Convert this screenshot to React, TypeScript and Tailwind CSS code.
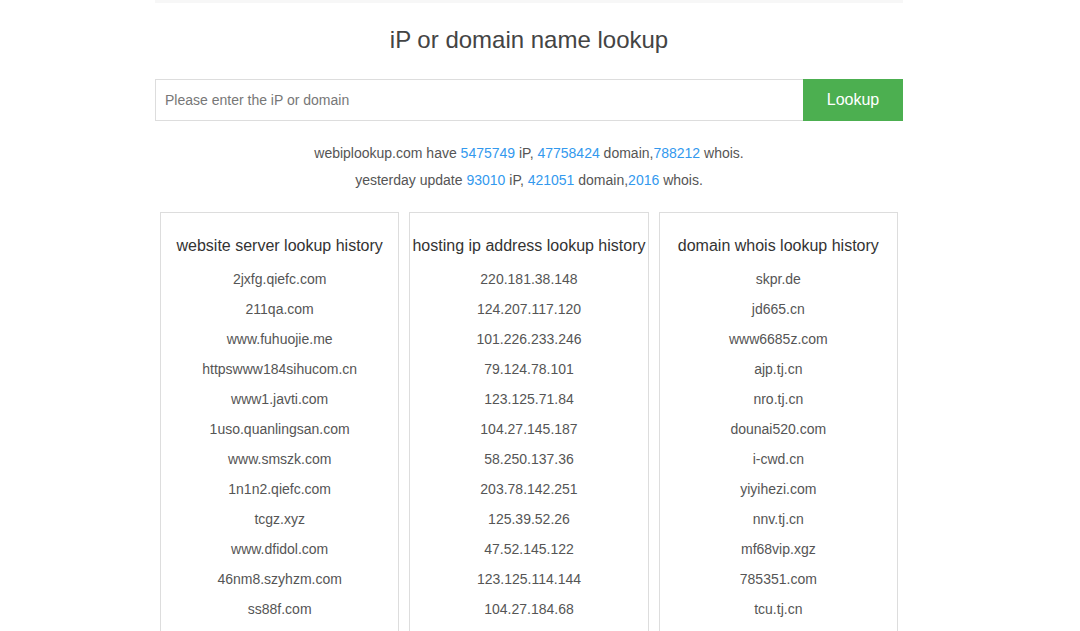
import React from "react"

const servers = [
  "2jxfg.qiefc.com",
  "211qa.com",
  "www.fuhuojie.me",
  "httpswww184sihucom.cn",
  "www1.javti.com",
  "1uso.quanlingsan.com",
  "www.smszk.com",
  "1n1n2.qiefc.com",
  "tcgz.xyz",
  "www.dfidol.com",
  "46nm8.szyhzm.com",
  "ss88f.com",
]

const ips = [
  "220.181.38.148",
  "124.207.117.120",
  "101.226.233.246",
  "79.124.78.101",
  "123.125.71.84",
  "104.27.145.187",
  "58.250.137.36",
  "203.78.142.251",
  "125.39.52.26",
  "47.52.145.122",
  "123.125.114.144",
  "104.27.184.68",
]

const whois = [
  "skpr.de",
  "jd665.cn",
  "www6685z.com",
  "ajp.tj.cn",
  "nro.tj.cn",
  "dounai520.com",
  "i-cwd.cn",
  "yiyihezi.com",
  "nnv.tj.cn",
  "mf68vip.xgz",
  "785351.com",
  "tcu.tj.cn",
]

function HistoryBox({ title, items }: { title: string; items: string[] }) {
  return (
    <div className="border border-[#dddddd] bg-white pb-8">
      <h3 className="pt-[21px] text-center text-[16px] leading-[24px] text-[#333] whitespace-nowrap">{title}</h3>
      <ul className="mt-[6px]">
        {items.map((item) => (
          <li key={item} className="text-center text-[14px] leading-[30px] text-[#555]">
            <a href="#">{item}</a>
          </li>
        ))}
      </ul>
    </div>
  )
}

const Num = ({ children }: { children: React.ReactNode }) => (
  <a href="#" className="text-[#3399ee]">
    {children}
  </a>
)

export default function App() {
  return (
    <div className="min-h-screen bg-white font-['Liberation_Sans',Arial,sans-serif]">
      <div className="ml-[155px] w-[748px]">
        <div className="h-[3px] bg-[#f7f7f7]" />
        <h1 className="mt-5 text-center text-[24px] leading-[34px] text-[#444]">iP or domain name lookup</h1>
        <form className="mt-[22px] flex h-[42px]" onSubmit={(e) => e.preventDefault()}>
          <input
            type="text"
            placeholder="Please enter the iP or domain"
            className="h-full flex-1 border border-r-0 border-[#dddddd] px-[9px] text-[14px] text-[#555] outline-none placeholder:text-[#777]"
          />
          <button type="submit" className="h-full w-[100px] bg-[#4caf50] text-[16px] text-white">
            Lookup
          </button>
        </form>
        <div className="mt-[19px] text-center text-[14px] leading-[27px] text-[#555]">
          <p>
            webiplookup.com have <Num>5475749</Num> iP, <Num>47758424</Num> domain,<Num>788212</Num> whois.
          </p>
          <p>
            yesterday update <Num>93010</Num> iP, <Num>421051</Num> domain,<Num>2016</Num> whois.
          </p>
        </div>
        <div className="mt-[18px] grid grid-cols-3 gap-[10px] px-[5px]">
          <HistoryBox title="website server lookup history" items={servers} />
          <HistoryBox title="hosting ip address lookup history" items={ips} />
          <HistoryBox title="domain whois lookup history" items={whois} />
        </div>
      </div>
    </div>
  )
}
